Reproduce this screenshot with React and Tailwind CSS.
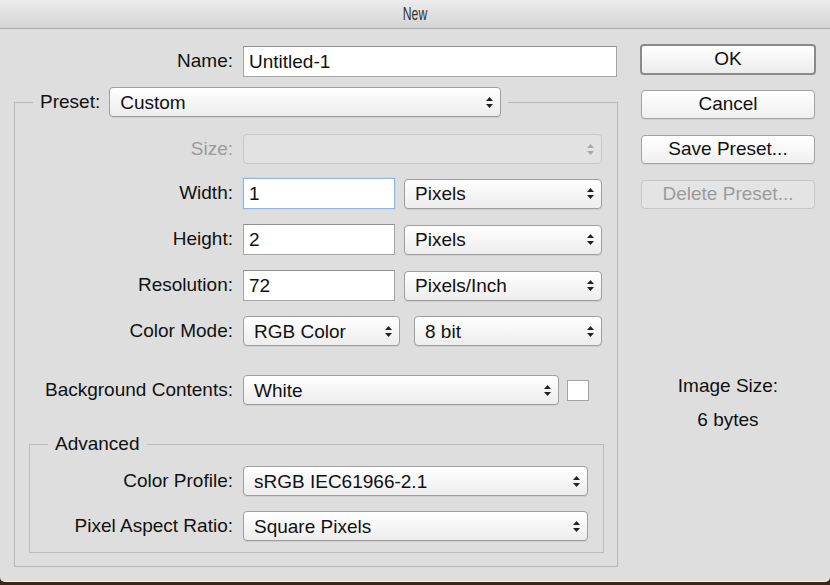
import React from 'react';
import clsx from 'clsx';

function Arrows({ disabled }) {
  return (
    <svg width="7" height="11" viewBox="0 0 7 11" className="shrink-0">
      <path d="M3.5 0 L7 4 H0 Z" fill={disabled ? '#a8a8a8' : '#222'} />
      <path d="M0 7 H7 L3.5 11 Z" fill={disabled ? '#a8a8a8' : '#222'} />
    </svg>
  );
}

function Select({ value, className, disabled }) {
  return (
    <div
      className={clsx(
        'flex h-[30px] items-center justify-between rounded-[4px] border pl-[10px] pr-[7px]',
        disabled
          ? 'border-[#c8c8c8] bg-[#e2e2e2]'
          : 'border-[#9e9e9e] bg-gradient-to-b from-white to-[#ededed] shadow-[0_1px_0_rgba(0,0,0,0.07)]',
        className
      )}
    >
      <span className="leading-none">{value}</span>
      <Arrows disabled={disabled} />
    </div>
  );
}

function Input({ value, className, focused }) {
  return (
    <div
      className={clsx(
        'flex h-[31px] items-center border bg-white pl-[5px]',
        focused
          ? 'border-[#8db4e4] shadow-[0_0_0_1px_#c3d8f1]'
          : 'border-[#a5a5a5] border-t-[#8f8f8f]',
        className
      )}
    >
      <span className="leading-none">{value}</span>
    </div>
  );
}

function Row({ label, labelW, gray, className, children }) {
  return (
    <div className={clsx('flex items-center', className)}>
      <div className={clsx('shrink-0 pr-[10px] text-right', labelW, gray && 'text-[#9b9b9b]')}>
        {label}
      </div>
      {children}
    </div>
  );
}

function Button({ children, primary, disabled, className }) {
  return (
    <div
      className={clsx(
        'flex items-center justify-center rounded-[4px]',
        primary
          ? 'h-[31px] w-[176px] border-2 border-[#8a8a8a] bg-gradient-to-b from-white to-[#ececec]'
          : 'mx-[1px] h-[29px] w-[174px] border',
        !primary && !disabled && 'border-[#a2a2a2] bg-gradient-to-b from-white to-[#f0f0f0] shadow-[0_1px_0_rgba(0,0,0,0.06)]',
        disabled && 'border-[#c6c6c6] bg-[#e4e4e4] text-[#9c9c9c]',
        className
      )}
    >
      {children}
    </div>
  );
}

export default function App() {
  return (
    <div className="h-[585px] w-[830px] overflow-hidden bg-[#3d2616] font-['Liberation_Sans',Arial,sans-serif] text-[19px] text-[#111]">
      <div className="flex h-[582px] flex-col overflow-hidden rounded-b-[5px] border-b border-[#f4f4f4] bg-[#dedede]">
        {/* title bar */}
        <div className="flex h-[29px] shrink-0 items-center justify-center border-b border-[#ababab] bg-gradient-to-b from-[#ececec] to-[#d4d4d4]">
          <span className="inline-block scale-x-[0.64] font-['Liberation_Sans',Arial,sans-serif] text-[19px] text-[#333]">New</span>
        </div>

        <div className="flex flex-1">
          {/* left side */}
          <div className="w-[618px] shrink-0 pl-[14px]">
            <Row label="Name:" labelW="w-[229px]" className="mt-[17px]">
              <Input value="Untitled-1" className="w-[374px]" />
            </Row>

            <fieldset className="mt-[10px] w-[604px] border border-[#b7b7b7] pb-[13px]">
              <legend className="ml-[18px] px-[7px]">
                <div className="flex items-center gap-[9px]">
                  <span>Preset:</span>
                  <Select value="Custom" className="w-[392px]" />
                </div>
              </legend>

              <Row label="Size:" labelW="w-[228px]" gray className="mt-[17px]">
                <Select value="" disabled className="w-[359px]" />
              </Row>
              <Row label="Width:" labelW="w-[228px]" className="mt-[14px]">
                <Input value="1" focused className="w-[152px]" />
                <Select value="Pixels" className="ml-[9px] w-[198px]" />
              </Row>
              <Row label="Height:" labelW="w-[228px]" className="mt-[15px]">
                <Input value="2" className="w-[152px]" />
                <Select value="Pixels" className="ml-[9px] w-[198px]" />
              </Row>
              <Row label="Resolution:" labelW="w-[228px]" className="mt-[15px]">
                <Input value="72" className="w-[152px]" />
                <Select value="Pixels/Inch" className="ml-[9px] w-[198px]" />
              </Row>
              <Row label="Color Mode:" labelW="w-[228px]" className="mt-[15px]">
                <Select value="RGB Color" className="w-[157px]" />
                <Select value="8 bit" className="ml-[14px] w-[188px]" />
              </Row>
              <Row label="Background Contents:" labelW="w-[228px]" className="mt-[29px]">
                <Select value="White" className="w-[316px]" />
                <div className="ml-[8px] h-[21px] w-[22px] border border-[#a3a3a3] bg-white" />
              </Row>

              <fieldset className="ml-[14px] mt-[28px] w-[575px] border border-[#bdbdbd] pb-[11px]">
                <legend className="ml-[18px] px-[7px] leading-[22px]">Advanced</legend>
                <Row label="Color Profile:" labelW="w-[213px]" className="mt-[11px]">
                  <Select value="sRGB IEC61966-2.1" className="w-[345px]" />
                </Row>
                <Row label="Pixel Aspect Ratio:" labelW="w-[213px]" className="mt-[15px]">
                  <Select value="Square Pixels" className="w-[345px]" />
                </Row>
              </fieldset>
            </fieldset>
          </div>

          {/* right side */}
          <div className="ml-[22px] flex w-[176px] flex-col items-center">
            <Button primary className="mt-[15px]">OK</Button>
            <Button className="mt-[15px]">Cancel</Button>
            <Button className="mt-[16px]">Save Preset...</Button>
            <Button disabled className="mt-[16px]">Delete Preset...</Button>
            <div className="mt-[166px] leading-[22px]">Image Size:</div>
            <div className="mt-[12px] leading-[22px]">6 bytes</div>
          </div>
        </div>
      </div>
    </div>
  );
}
